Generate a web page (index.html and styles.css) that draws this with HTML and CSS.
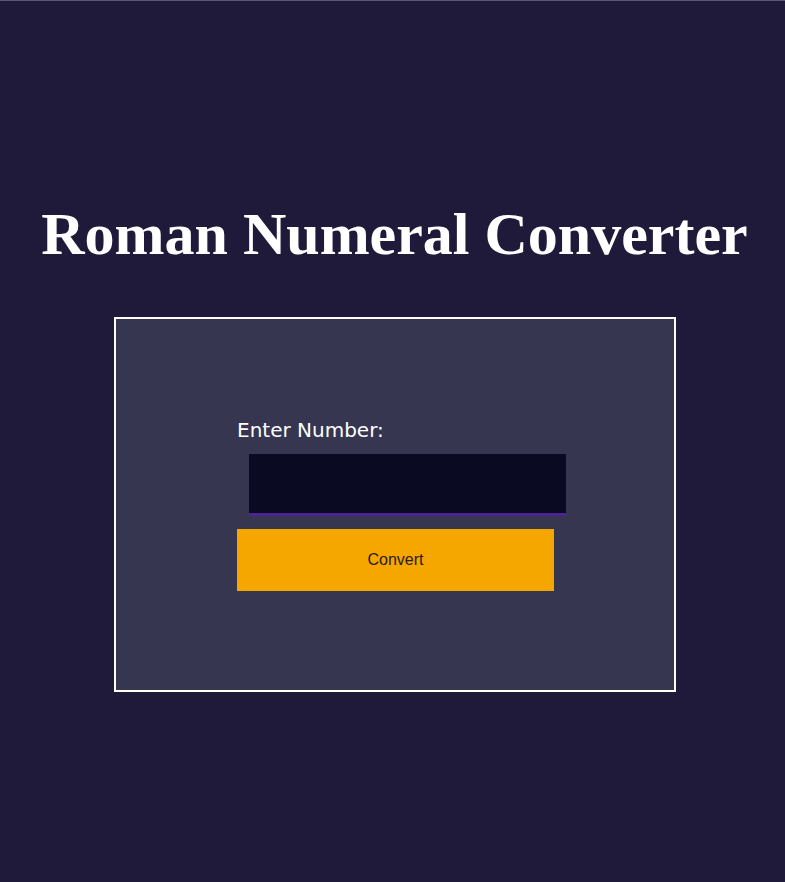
FILE: index.html
```html
<!DOCTYPE html>
<html lang="en">
<head>
<meta charset="utf-8">
<title>Roman Numeral Converter</title>
<link rel="stylesheet" href="styles.css">
</head>
<body>
<main class="page">
  <h1 class="title">Roman Numeral Converter</h1>
  <form class="card" onsubmit="return false">
    <div class="form-inner">
      <label class="label" for="number">Enter Number:</label>
      <input class="input" id="number" type="number">
      <button class="btn" type="button">Convert</button>
    </div>
  </form>
</main>
</body>
</html>
```
FILE: styles.css
```css
html, body {
  margin: 0;
  padding: 0;
  background: #1f1a39;
  height: 100%;
}
body {
  border-top: 1px solid #5a5870;
  box-sizing: border-box;
}
.page {
  display: flex;
  flex-direction: column;
  align-items: center;
  padding-top: 195px;
}
.title {
  margin: 0 0 0 4px;
  font-family: "Liberation Serif", "Times New Roman", serif;
  font-weight: bold;
  font-size: 60px;
  line-height: 76px;
  color: #ffffff;
  text-align: center;
}
.card {
  align-self: flex-start;
  margin-top: 45px;
  margin-left: 114px;
  width: 558px;
  height: 371px;
  background: #363650;
  border: 2px solid #ffffff;
  box-sizing: content-box;
  display: flex;
  justify-content: flex-start;
}
.form-inner {
  margin-left: 121px;
  margin-top: 99px;
  display: flex;
  flex-direction: column;
  align-items: flex-start;
}
.label {
  font-family: "DejaVu Sans", Verdana, sans-serif;
  font-size: 20px;
  line-height: 24px;
  color: #ffffff;
}
.input {
  margin: 12px 0 0 12px;
  width: 317px;
  height: 62px;
  box-sizing: border-box;
  background: #0a0a23;
  border: none;
  border-bottom: 3px solid #4c2494;
  color: #fff;
  outline: none;
  padding: 0 10px;
}
.btn {
  margin-top: 13px;
  width: 317px;
  height: 62px;
  background: #f5a700;
  border: none;
  font-family: "Liberation Sans", Arial, sans-serif;
  font-size: 16px;
  color: #2a1a1a;
  cursor: pointer;
}
```
